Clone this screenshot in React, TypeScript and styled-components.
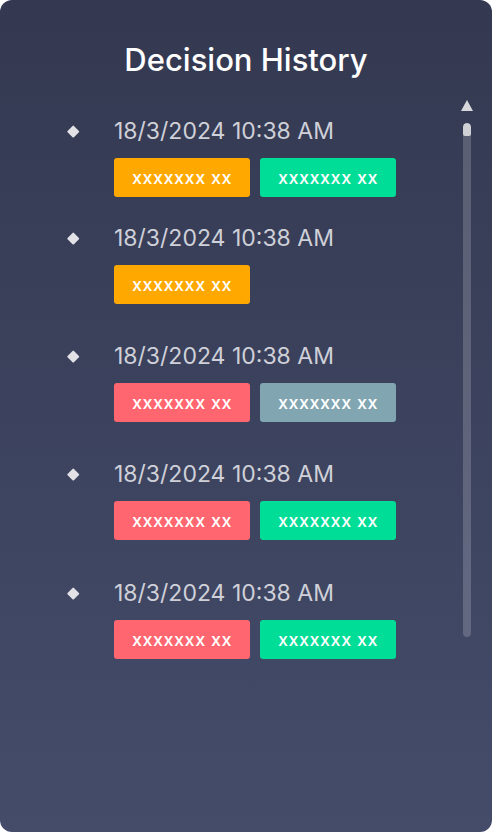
import React from "react";
import styled, { createGlobalStyle } from "styled-components";

const Global = createGlobalStyle`
  html, body { margin: 0; padding: 0; background: #ffffff; }
  body { font-family: Inter, "Noto Sans", sans-serif; }
  * { box-sizing: border-box; }
`;

const Card = styled.div`
  width: 492px;
  height: 832px;
  border-radius: 12px;
  background: linear-gradient(180deg, #343951 0%, #444c6a 100%);
  display: flex;
  flex-direction: column;
  overflow: hidden;
`;

const Title = styled.h1`
  margin: 0;
  padding-top: 41px;
  height: 100px;
  text-align: center;
  font-family: Inter, sans-serif;
  font-weight: 500;
  font-size: 31px;
  line-height: 38px;
  color: #ffffff;
`;

const Body = styled.div`
  display: flex;
  flex-direction: row;
`;

const List = styled.div`
  flex: 1;
  display: flex;
  flex-direction: column;
  padding-left: 66px;
  padding-top: 19px;
`;

const Item = styled.div<{ $gap: number }>`
  display: flex;
  flex-direction: row;
  margin-top: ${(p) => p.$gap}px;
`;

const Bullet = styled.div`
  width: 48px;
  height: 24px;
  display: flex;
  align-items: center;
  padding-left: 3px;
`;

const Diamond = styled.span`
  display: block;
  width: 8.5px;
  height: 8.5px;
  background: #e2e2e6;
  transform: rotate(45deg);
  border-radius: 1px;
`;

const Content = styled.div`
  display: flex;
  flex-direction: column;
  gap: 15px;
`;

const Date = styled.div`
  font-family: Inter, sans-serif;
  font-size: 23px;
  line-height: 24px;
  color: #cfd0d8;
`;

const Badges = styled.div`
  display: flex;
  gap: 10px;
`;

const Badge = styled.div<{ $color: string }>`
  width: 136px;
  height: 39px;
  border-radius: 3px;
  background: ${(p) => p.$color};
  color: #ffffff;
  display: flex;
  align-items: center;
  justify-content: center;
  font-family: Inter, sans-serif;
  font-weight: 500;
  font-size: 18px;
  letter-spacing: 0.5px;
`;

const ScrollCol = styled.div`
  width: 27px;
  margin-right: 12px;
  display: flex;
  flex-direction: column;
  align-items: center;
`;

const Arrow = styled.div`
  width: 0;
  height: 0;
  border-left: 6px solid transparent;
  border-right: 6px solid transparent;
  border-bottom: 11px solid #d8d8dc;
`;

const Track = styled.div`
  margin-top: 12px;
  width: 8px;
  height: 514px;
  border-radius: 4px;
  background: rgba(255, 255, 255, 0.18);
  overflow: hidden;
`;

const Thumb = styled.div`
  width: 8px;
  height: 13px;
  border-radius: 4px 4px 2px 2px;
  background: #cfd0d4;
`;

const GOLD = "#ffa800";
const GREEN = "#00dd97";
const RED = "#ff6670";
const GREY = "#82a6b1";

const items: { gap: number; badges: string[] }[] = [
  { gap: 0, badges: [GOLD, GREEN] },
  { gap: 29, badges: [GOLD] },
  { gap: 40, badges: [RED, GREY] },
  { gap: 40, badges: [RED, GREEN] },
  { gap: 41, badges: [RED, GREEN] },
];

export default function App() {
  return (
    <>
      <Global />
      <Card>
        <Title>Decision History</Title>
        <Body>
          <List>
            {items.map((it, i) => (
              <Item key={i} $gap={it.gap}>
                <Bullet>
                  <Diamond />
                </Bullet>
                <Content>
                  <Date>18/3/2024 10:38 AM</Date>
                  <Badges>
                    {it.badges.map((c, j) => (
                      <Badge key={j} $color={c}>
                        xxxxxxx xx
                      </Badge>
                    ))}
                  </Badges>
                </Content>
              </Item>
            ))}
          </List>
          <ScrollCol>
            <Arrow />
            <Track>
              <Thumb />
            </Track>
          </ScrollCol>
        </Body>
      </Card>
    </>
  );
}
